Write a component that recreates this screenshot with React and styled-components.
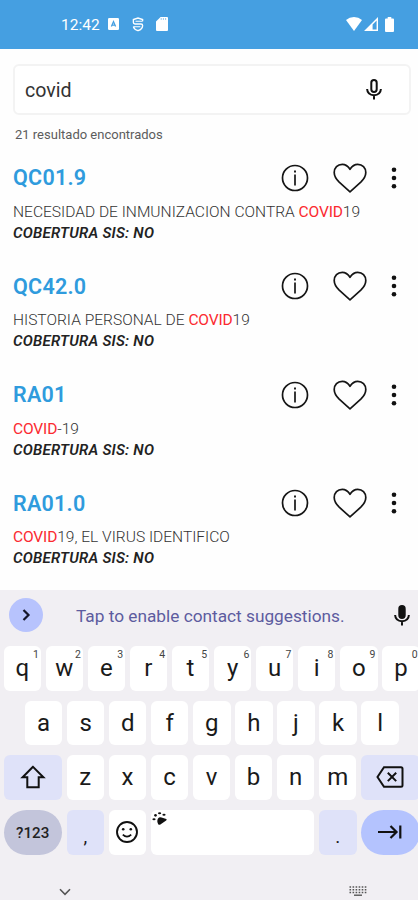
import React from "react";
import styled, { createGlobalStyle } from "styled-components";

const results = [
  { code: "QC01.9", before: "NECESIDAD DE INMUNIZACION CONTRA ", after: "19" },
  { code: "QC42.0", before: "HISTORIA PERSONAL DE ", after: "19" },
  { code: "RA01", before: "", after: "-19" },
  { code: "RA01.0", before: "", after: "19, EL VIRUS IDENTIFICO" },
];

const StatusBar = () => (
  <StatusWrapper>
    <StatusGroup>
      <Clock>12:42</Clock>
      <svg width="11" height="12" viewBox="0 0 11 12">
        <rect width="11" height="12" rx="1.2" fill="#fff" />
        <path d="M3.4 8.6 5.5 3.6l2.1 5M4 7.2h3" fill="none" stroke="#459fe1" strokeWidth="1.3" />
      </svg>
      <svg width="12" height="15" viewBox="0 0 12 15" fill="none" stroke="#fff" strokeWidth="1.4">
        <path d="M10.6 4.2V2.6L6 1 1.4 2.6v3Q1.4 7 3 7h6q1.600 0 1.600 1.400Q10.600 12 6 13.700 2 12.400 1.400 9.600" />
        <path d="M3.500 4.300h7M1.400 9.800h7" strokeWidth="1.100" />
      </svg>
      <svg width="12" height="14" viewBox="0 0 12 14">
        <path d="M4.600 0H11q1 0 1 1v12q0 1-1 1H1q-1 0-1-1V4.600z" fill="#fff" />
        <path d="M5.200 1.200v1.600M7.400 1.200v1.600M9.600 1.200v1.600" stroke="#459fe1" strokeWidth=".7" />
      </svg>
    </StatusGroup>
    <StatusGroup $right>
      <svg width="16" height="14" viewBox="0 0 16 14">
        <path d="M0 3Q3.500 0 8 0t8 3L8 14z" fill="#fff" />
      </svg>
      <svg width="14" height="14" viewBox="0 0 14 14">
        <path d="M14 0v14H0zM12.600 3.400 8.600 7.500v5.100h4z" fill="#fff" fillRule="evenodd" />
      </svg>
      <svg width="9" height="15" viewBox="0 0 9 15">
        <path d="M2.700 0h3.600v1.500H8q1 0 1 1V14q0 1-1 1H1q-1 0-1-1V2.500q0-1 1-1h1.700z" fill="#fff" />
      </svg>
    </StatusGroup>
  </StatusWrapper>
);

const MicIcon = ({ solid }) => (
  <svg width="16" height="21" viewBox="0 0 16 21" fill="none" stroke="#111" strokeWidth="2">
    <rect x="5.300" y="1" width="5.400" height="12" rx="2.700" fill={solid ? "#111" : "none"} />
    <path d="M1.100 10q.4 6 6.900 6.200 6.500-.2 6.900-6.200M8 16v4.500" />
  </svg>
);

const InfoIcon = () => (
  <svg width="28" height="28" viewBox="0 0 28 28" fill="none" stroke="#151515">
    <circle cx="14" cy="14" r="12.500" strokeWidth="1.700" />
    <path d="M14 10.500v11" strokeWidth="1.700" />
    <path d="M14 6.500v2" strokeWidth="1.900" />
  </svg>
);

const HeartIcon = () => (
  <svg width="34" height="30" viewBox="0 0 34 30" fill="none" stroke="#151515" strokeWidth="1.700" strokeLinejoin="round">
    <path d="M17 6.300C14.800 2.700 12.300 1.300 9.200 1.300 4.600 1.300 1.200 4.800 1.200 9.500c0 4 2 6.700 5 9.700L17 28.800l10.800-9.600c3-3 5-5.700 5-9.700 0-4.700-3.400-8.200-8-8.200-3.100 0-5.600 1.400-7.800 5z" />
  </svg>
);

const DotsIcon = () => (
  <svg width="6" height="22" viewBox="0 0 6 22" fill="#111">
    <circle cx="3" cy="2.700" r="2.300" />
    <circle cx="3" cy="11" r="2.300" />
    <circle cx="3" cy="19.300" r="2.300" />
  </svg>
);

const Result = ({ code, before, after }) => (
  <ResultRow>
    <ResultHead>
      <Code>{code}</Code>
      <Actions>
        <InfoIcon />
        <HeartIcon />
        <DotsIcon />
      </Actions>
    </ResultHead>
    <Description>
      {before}
      <Match>COVID</Match>
      {after}
    </Description>
    <Coverage>COBERTURA SIS: NO</Coverage>
  </ResultRow>
);

const Keyboard = () => (
  <KeyboardWrapper>
    <Suggestions>
      <ExpandButton>
        <svg width="10" height="12" viewBox="0 0 10 12" fill="none" stroke="#15152a" strokeWidth="2.200">
          <path d="m2.500 1 5 5-5 5" />
        </svg>
      </ExpandButton>
      <Hint>Tap to enable contact suggestions.</Hint>
      <MicIcon solid />
    </Suggestions>
    <KeyRow>
      {"qwertyuiop".split("").map((letter, i) => (
        <Key key={letter}>
          {letter}
          <Digit>{(i + 1) % 10}</Digit>
        </Key>
      ))}
    </KeyRow>
    <KeyRow $indent>
      {"asdfghjkl".split("").map((letter) => (
        <Key key={letter}>{letter}</Key>
      ))}
    </KeyRow>
    <KeyRow>
      <Key $wide $bg="#dfe2f9">
        <svg width="26" height="24" viewBox="0 0 26 24" fill="none" stroke="#111" strokeWidth="2">
          <path d="M13 1.800 2.600 12.300h4.700v9.900h11.400v-9.900h4.700z" />
        </svg>
      </Key>
      {"zxcvbnm".split("").map((letter) => (
        <Key key={letter}>{letter}</Key>
      ))}
      <Key $wide $bg="#dfe2f9">
        <svg width="28" height="22" viewBox="0 0 28 22" fill="none" stroke="#111" strokeWidth="2">
          <path d="M8 1.200h17q1.500 0 1.500 1.500v16.600q0 1.500-1.500 1.500H8L1.500 11zM11.800 6.700l8.400 8.400m0-8.400-8.400 8.400" />
        </svg>
      </Key>
    </KeyRow>
    <KeyRow>
      <Key $wide $round $bg="#c3c5db">
        <Label>?123</Label>
      </Key>
      <Key $bg="#dfe2f9">
        <Punctuation>,</Punctuation>
      </Key>
      <Key>
        <svg width="24" height="24" viewBox="0 0 24 24" fill="none" stroke="#111" strokeWidth="1.900">
          <circle cx="12" cy="12" r="10" />
          <path d="M7.800 14.700q4.200 3.800 8.400 0" strokeWidth="1.800" />
          <circle cx="8.200" cy="9.200" r="1.300" fill="#111" stroke="none" />
          <circle cx="15.800" cy="9.200" r="1.300" fill="#111" stroke="none" />
        </svg>
      </Key>
      <SpaceKey>
        <svg width="15" height="15" viewBox="0 0 15 15" fill="#111">
          <path d="M6 7.500Q7.500 5.500 9.500 6.500l4.800 1.600q.8.800-.5 1.700L8 13.800q-2 .3-2.300-1.900Q4.800 9.500 6 7.500z" />
          <ellipse cx="2" cy="8.200" rx="1.600" ry="1" />
          <ellipse cx="3.500" cy="4.300" rx="1.300" ry="1.400" />
          <ellipse cx="7.600" cy="2.200" rx="1.600" ry="1" />
          <ellipse cx="12" cy="3.700" rx="1.600" ry="1" />
        </svg>
      </SpaceKey>
      <Key $bg="#dfe2f9">
        <Punctuation>.</Punctuation>
      </Key>
      <Key $wide $round $bg="#b4c3fe">
        <svg width="24" height="14" viewBox="0 0 24 14" fill="none" stroke="#111" strokeWidth="2.200">
          <path d="M0 7h18.500M12.500 1l6 6-6 6M22.300.5v13" />
        </svg>
      </Key>
    </KeyRow>
    <NavBar>
      <svg width="12" height="8" viewBox="0 0 12 8" fill="none" stroke="#555" strokeWidth="1.600">
        <path d="m1 1.300 5 5 5-5" />
      </svg>
      <svg width="18" height="10" viewBox="0 0 18 10" fill="none" stroke="#555" strokeWidth="1.400">
        <path d="M.5 1h17M.5 3.800h17M.5 6.500h17" strokeDasharray="1.600 1.450" />
        <path d="M5 9.200h8" />
      </svg>
    </NavBar>
  </KeyboardWrapper>
);

export default function App() {
  return (
    <Screen>
      <GlobalStyle />
      <StatusBar />
      <Content>
        <SearchBox>
          <Query>covid</Query>
          <MicIcon />
        </SearchBox>
        <Count>21 resultado encontrados</Count>
        {results.map((item) => (
          <Result key={item.code} {...item} />
        ))}
      </Content>
      <Keyboard />
    </Screen>
  );
}

const GlobalStyle = createGlobalStyle`
  * {
    box-sizing: border-box;
  }
  body {
    margin: 0;
    font-family: Roboto, "Liberation Sans", sans-serif;
  }
  svg {
    display: block;
    flex: none;
  }
`;

const Screen = styled.div`
  display: flex;
  flex-direction: column;
  width: 418px;
  height: 900px;
  overflow: hidden;
  background: #fefefe;
`;

const StatusWrapper = styled.header`
  display: flex;
  flex: none;
  justify-content: space-between;
  height: 49px;
  padding: 0 24px 1px 61px;
  background: #459fe1;
`;

const StatusGroup = styled.div`
  display: flex;
  align-items: center;
  gap: ${(props) => (props.$right ? "2px" : "0")};
  svg:last-child {
    margin-left: ${(props) => (props.$right ? "5px" : "12px")};
  }
  svg:nth-child(3) {
    margin-left: ${(props) => (props.$right ? "5px" : "13px")};
  }
`;

const Clock = styled.span`
  width: 47px;
  padding-top: 1px;
  color: #fff;
  font-size: 15.500px;
  font-weight: 400;
`;

const Content = styled.main`
  flex: none;
  height: 541px;
  padding: 15px 7px 0 13px;
`;

const SearchBox = styled.div`
  display: flex;
  align-items: center;
  justify-content: space-between;
  height: 51px;
  padding: 0 27px 0 10px;
  border: 2px solid #f3f3f3;
  border-radius: 6px;
  background: #fff;
`;

const Query = styled.span`
  padding-top: 2px;
  color: #333;
  font-size: 19.600px;
`;

const Count = styled.p`
  margin: 11px 0 0 2px;
  color: #5c5c5c;
  font-size: 13px;
  line-height: 18px;
`;

const ResultRow = styled.article`
  height: 108.500px;
  padding-top: 16.800px;
`;

const ResultHead = styled.div`
  display: flex;
  align-items: center;
  justify-content: space-between;
  height: 34px;
  padding-right: 14px;
`;

const Code = styled.h2`
  margin: 0;
  color: #2f9bdd;
  font-size: 21.500px;
  font-weight: 600;
  letter-spacing: 0.250px;
`;

const Actions = styled.div`
  display: flex;
  align-items: center;
  gap: 24px;
`;

const Description = styled.p`
  margin: 7px 0 0;
  color: #333;
  font-size: 15.550px;
  font-weight: 300;
  line-height: 20px;
  white-space: nowrap;
`;

const Match = styled.span`
  color: #fb2a30;
  font-weight: 400;
  letter-spacing: -0.150px;
`;

const Coverage = styled.p`
  margin: 0;
  color: #222;
  font-size: 15px;
  font-style: italic;
  font-weight: 600;
  line-height: 22px;
  letter-spacing: 0.250px;
`;

const KeyboardWrapper = styled.section`
  display: flex;
  flex: 1;
  flex-direction: column;
  gap: 10px;
  background: #f1eff3;
`;

const Suggestions = styled.div`
  display: flex;
  align-items: center;
  height: 46px;
  padding: 0 8px 0 9px;
  margin-top: 2px;
  margin-bottom: -2px;
`;

const ExpandButton = styled.button`
  display: flex;
  flex: none;
  align-items: center;
  justify-content: center;
  width: 34px;
  height: 34px;
  padding: 0;
  border: 0;
  border-radius: 50%;
  background: #b7c3fd;
`;

const Hint = styled.span`
  flex: 1;
  margin-left: 33px;
  padding-top: 2px;
  color: #5d5c9f;
  font-size: 17.250px;
  white-space: nowrap;
`;

const KeyRow = styled.div`
  display: flex;
  flex: none;
  gap: 4.700px;
  height: 44.700px;
  padding-left: ${(props) => (props.$indent ? "24.800px" : "3.500px")};
`;

const Key = styled.div`
  position: relative;
  display: flex;
  flex: none;
  align-items: center;
  justify-content: center;
  width: ${(props) => (props.$wide ? "58.400px" : "37.400px")};
  padding-bottom: 1px;
  border-radius: ${(props) => (props.$round ? "23px" : "6px")};
  background: ${(props) => props.$bg || "#fff"};
  color: #1a1a1a;
  font-size: 24px;
`;

const SpaceKey = styled(Key)`
  align-items: flex-start;
  justify-content: flex-start;
  width: 163.700px;
  padding: 1px;
`;

const Digit = styled.sup`
  position: absolute;
  top: 3px;
  right: 2px;
  color: #444;
  font-size: 10.500px;
  line-height: 12px;
`;

const Label = styled.span`
  padding-top: 3px;
  color: #222;
  font-size: 15.200px;
  font-weight: 500;
`;

const Punctuation = styled.span`
  padding-top: 9px;
  font-size: 19px;
`;

const NavBar = styled.footer`
  display: flex;
  flex: 1;
  align-items: flex-end;
  justify-content: space-between;
  padding: 0 51px 4px 59px;
`;
